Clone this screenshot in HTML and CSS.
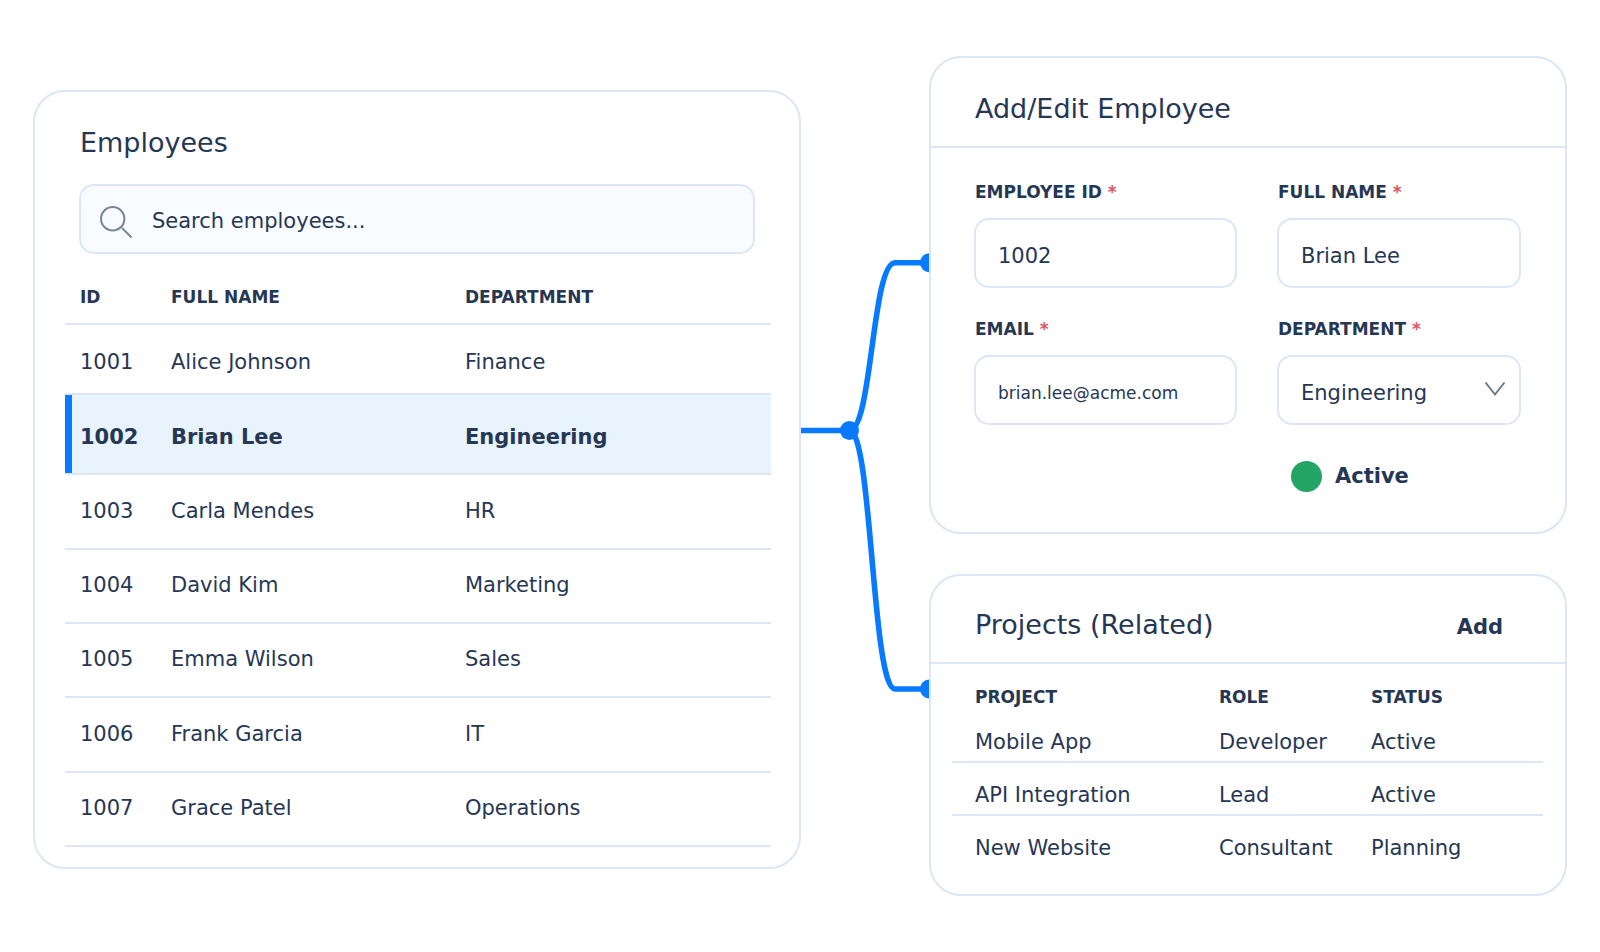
FILE: index.html
```html
<!DOCTYPE html>
<html lang="en">
<head>
    <meta charset="UTF-8">
    <meta name="viewport" content="width=device-width, initial-scale=1.0">
    <title>Employees</title>
    <link rel="stylesheet" href="styles.css">
</head>
<body>

<main class="layout">
    <section class="card employees">
        <h2 class="employees-title">Employees</h2>
        <div class="search">
            <svg class="search-icon" width="34" height="34" viewBox="0 0 34 34" aria-hidden="true">
                <circle cx="12.7" cy="12.7" r="11.7"></circle>
                <path d="M22 22 L31.5 31.5"></path>
            </svg>
            <input type="search" id="search" placeholder="Search employees..." aria-label="Search employees">
        </div>
        <table class="employee-table">
            <thead>
                <tr>
                    <th class="col-id">ID</th>
                    <th class="col-name">FULL NAME</th>
                    <th>DEPARTMENT</th>
                </tr>
            </thead>
            <tbody>
                <tr class="first">
                    <td>1001</td>
                    <td>Alice Johnson</td>
                    <td>Finance</td>
                </tr>
                <tr class="selected">
                    <td>1002</td>
                    <td>Brian Lee</td>
                    <td>Engineering</td>
                </tr>
                <tr>
                    <td>1003</td>
                    <td>Carla Mendes</td>
                    <td>HR</td>
                </tr>
                <tr>
                    <td>1004</td>
                    <td>David Kim</td>
                    <td>Marketing</td>
                </tr>
                <tr>
                    <td>1005</td>
                    <td>Emma Wilson</td>
                    <td>Sales</td>
                </tr>
                <tr>
                    <td>1006</td>
                    <td>Frank Garcia</td>
                    <td>IT</td>
                </tr>
                <tr>
                    <td>1007</td>
                    <td>Grace Patel</td>
                    <td>Operations</td>
                </tr>
            </tbody>
        </table>
    </section>

    <!-- Lines from the selected row to the two detail cards -->
    <svg class="connector" width="128" height="840" viewBox="0 0 128 840" aria-hidden="true">
        <path d="M-1 374.5 H48.5 C71 374.5 71 206.7 94 206.7 H128"></path>
        <path d="M48.5 374.5 C71 374.5 71 633 94 633 H128"></path>
        <circle cx="48.5" cy="374.5" r="9.5"></circle>
        <circle cx="128.5" cy="206.7" r="9.5"></circle>
        <circle cx="128.5" cy="633" r="9.5"></circle>
    </svg>

    <div class="details">
        <section class="card">
            <header class="card-header">
                <h2>Add/Edit Employee</h2>
            </header>
            <form class="employee-form">
                <div class="field">
                    <label for="employee-id">EMPLOYEE ID <span class="required">*</span></label>
                    <input type="text" id="employee-id" value="1002">
                </div>
                <div class="field">
                    <label for="full-name">FULL NAME <span class="required">*</span></label>
                    <input type="text" id="full-name" value="Brian Lee">
                </div>
                <div class="field">
                    <label for="email">EMAIL <span class="required">*</span></label>
                    <input type="email" id="email" class="small" value="brian.lee@acme.com">
                </div>
                <div class="field">
                    <label for="department">DEPARTMENT <span class="required">*</span></label>
                    <div class="select">
                        <select id="department">
                            <option>Finance</option>
                            <option selected>Engineering</option>
                            <option>HR</option>
                            <option>Marketing</option>
                            <option>Sales</option>
                            <option>IT</option>
                            <option>Operations</option>
                        </select>
                        <svg class="chevron" width="22" height="16" viewBox="0 0 22 16" aria-hidden="true">
                            <path d="M1.5 1.5 L11 13.5 L20.5 1.5"></path>
                        </svg>
                    </div>
                </div>
                <div class="status"><span class="dot"></span>Active</div>
            </form>
        </section>

        <section class="card">
            <header class="card-header compact">
                <h2>Projects (Related)</h2>
                <button type="button" class="add-button">Add</button>
            </header>
            <table class="project-table">
                <thead>
                    <tr>
                        <th class="col-project">PROJECT</th>
                        <th class="col-role">ROLE</th>
                        <th>STATUS</th>
                    </tr>
                </thead>
                <tbody>
                    <tr>
                        <td>Mobile App</td>
                        <td>Developer</td>
                        <td>Active</td>
                    </tr>
                    <tr>
                        <td>API Integration</td>
                        <td>Lead</td>
                        <td>Active</td>
                    </tr>
                    <tr>
                        <td>New Website</td>
                        <td>Consultant</td>
                        <td>Planning</td>
                    </tr>
                </tbody>
            </table>
        </section>
    </div>
</main>

</body>
</html>
```
FILE: styles.css
```css
/* General Styles */
* {
    box-sizing: border-box;
}
body {
    margin: 0;
    background: #ffffff;
    color: #263754;
    font-family: 'DejaVu Sans', sans-serif;
    font-size: 21px;
    line-height: 24px;
}
h2 {
    margin: 0;
    font-size: 27px;
    font-weight: normal;
    line-height: 32px;
}
input, select, button {
    font: inherit;
    color: inherit;
}
.layout {
    display: grid;
    grid-template-columns: 65fr 128px 54fr;
    align-items: start;
    padding: 56px 33px;
}
.card {
    background: #ffffff;
    border: 2px solid #dce6f4;
    border-radius: 32px;
}

/* Tables */
table {
    border-spacing: 0;
    table-layout: fixed;
}
th, td {
    padding: 0;
    text-align: left;
}
th {
    font-size: 17px;
    line-height: 20px;
}

/* Employees */
.employees {
    margin-top: 34px;
    padding: 35px 28px 20px 30px;
}
.employees-title {
    margin: 0 15px 25px;
}
.search {
    position: relative;
    margin: 0 16px 33px 14px;
}
.search input {
    display: block;
    width: 100%;
    height: 70px;
    padding: 4px 20px 0 71px;
    border: 2px solid #dce6f4;
    border-radius: 15px;
    background: #f8fbff;
    appearance: none;
}
.search input::placeholder {
    color: #263754;
    opacity: 1;
}
.search-icon {
    position: absolute;
    left: 21px;
    top: 22px;
    fill: none;
    stroke: #7a8498;
    stroke-width: 2;
}
.employee-table {
    width: 100%;
}
.employee-table th, .employee-table td {
    padding-left: 15px;
    border-bottom: 2px solid #dce6f4;
}
.employee-table th {
    padding-bottom: 16px;
}
.employee-table td {
    padding-bottom: 2px;
}
.employee-table .col-id {
    width: 91px;
}
.employee-table .col-name {
    width: 294px;
}
.employee-table tbody tr {
    height: 74px;
}
.employee-table tbody tr:nth-child(3n) {
    height: 75px;
}
.employee-table tbody .first {
    height: 70px;
}
.employee-table tbody .selected {
    height: 80px;
    background: #e8f3fe;
    font-weight: bold;
}
.employee-table .first td, .employee-table .selected td {
    padding-top: 8px;
}
.employee-table .selected td:first-child {
    box-shadow: inset 7px 0 #087aff;
}

/* Connector */
.connector path {
    fill: none;
    stroke: #087aff;
    stroke-width: 5.6;
}
.connector circle {
    fill: #087aff;
}

/* Details */
.details {
    display: flex;
    flex-direction: column;
    gap: 40px;
}
.card-header {
    display: flex;
    justify-content: space-between;
    align-items: baseline;
    padding: 35px 62px 21px 44px;
    border-bottom: 2px solid #dce6f4;
}
.card-header.compact {
    padding-top: 33px;
}
.add-button {
    padding: 0;
    border: none;
    background: none;
    font-weight: bold;
    cursor: pointer;
}
.employee-form {
    display: grid;
    grid-template-columns: 263fr 244fr;
    gap: 31px 40px;
    padding: 34px 44px 40px 43px;
}
.field label {
    display: block;
    margin: 0 0 16px 1px;
    font-size: 17px;
    font-weight: bold;
    line-height: 20px;
}
.required {
    color: #e05260;
}
.field input, .field select {
    display: block;
    width: 100%;
    height: 70px;
    padding: 6px 22px 0;
    border: 2px solid #dce6f4;
    border-radius: 15px;
    background: #ffffff;
    appearance: none;
}
.field .small {
    font-size: 17px;
}
.select {
    position: relative;
}
.chevron {
    position: absolute;
    right: 15px;
    top: 26px;
    fill: none;
    stroke: #6b7890;
    stroke-width: 2;
    pointer-events: none;
}
.status {
    grid-column: 2;
    display: flex;
    align-items: center;
    gap: 13px;
    margin-top: 4px;
    padding-left: 14px;
    font-weight: bold;
    line-height: 32px;
}
.dot {
    width: 31px;
    height: 31px;
    border-radius: 50%;
    background: #23a566;
}

/* Projects */
.project-table {
    width: calc(100% - 43px);
    margin: 23px 22px 27px 21px;
}
.project-table th {
    padding: 0 0 3px 23px;
}
.project-table td {
    padding: 20px 0 7px 23px;
    border-bottom: 2px solid #dce6f4;
}
.project-table tr:last-child td {
    border-bottom: none;
}
.project-table .col-project {
    width: 244px;
}
.project-table .col-role {
    width: 152px;
}
```
